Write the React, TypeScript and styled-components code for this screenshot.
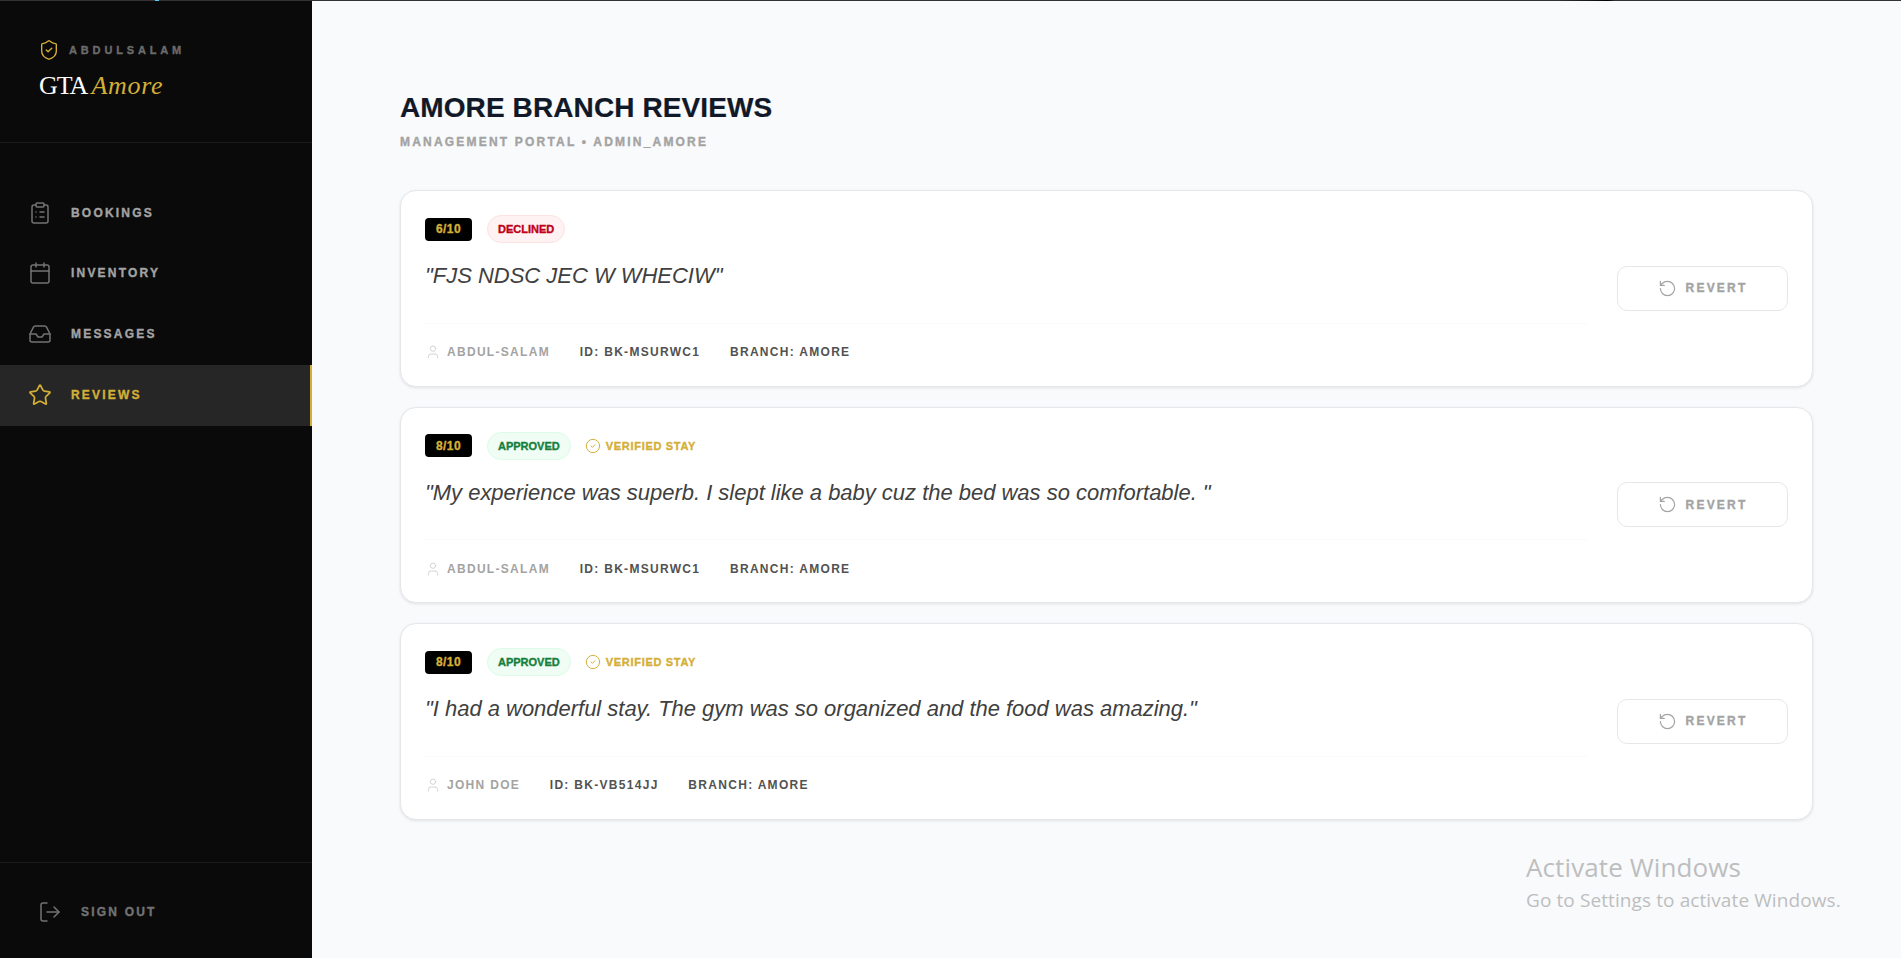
import * as React from 'react';
import styled, { createGlobalStyle, css } from 'styled-components';
import {
  Calendar,
  CircleCheck,
  ClipboardList,
  Inbox,
  LogOut,
  RotateCcw,
  ShieldCheck,
  Star,
  User,
} from 'lucide-react';

const GOLD = '#d4af37';

// the small labels are set in a black weight, which Liberation Sans does not have
const heavy = css`
  font-weight: 700;
  -webkit-text-stroke: 0.35px currentColor;
`;

const GlobalStyle = createGlobalStyle`
  html, body {
    margin: 0;
    padding: 0;
    background: #f9fafb;
  }
  body {
    font-family: "Liberation Sans", Arial, sans-serif;
  }
  * {
    box-sizing: border-box;
  }
`;

const Page = styled.div`
  position: relative;
  display: flex;
  height: 958px;
  overflow: hidden;
`;

const TopLine = styled.div`
  position: absolute;
  top: 0;
  left: 0;
  right: 0;
  height: 1px;
  background: linear-gradient(
    90deg,
    #333333 0,
    #333333 1555px,
    #111111 1596px,
    #000000 1608px,
    #333333 1615px,
    #333333 100%
  );
`;

const TopLineAccent = styled.div`
  position: absolute;
  top: 0;
  left: 155px;
  width: 4px;
  height: 1px;
  background: #5ec8ee;
`;

const Sidebar = styled.aside`
  width: 312px;
  flex: none;
  display: flex;
  flex-direction: column;
  background: #0a0a0a;
`;

const Brand = styled.div`
  height: 143px;
  padding: 39px 38px 0;
  border-bottom: 1px solid #1a1a1a;
`;

const BrandTop = styled.div`
  display: flex;
  align-items: center;
  gap: 9px;
  height: 22px;
  color: ${GOLD};
`;

const BrandName = styled.span`
  ${heavy};
  font-size: 11px;
  letter-spacing: 3.85px;
  color: #6b6b6b;
`;

const Logo = styled.div`
  margin-top: 10px;
  margin-left: 1px;
  font-family: "Liberation Serif", "Times New Roman", serif;
  font-size: 26px;
  line-height: 30px;
  letter-spacing: -1px;
  color: #ffffff;
`;

const LogoAccent = styled.em`
  letter-spacing: 0.7px;
  color: ${GOLD};
`;

const Nav = styled.nav`
  flex: 1;
  display: flex;
  flex-direction: column;
  padding-top: 40px;
`;

const NavItem = styled.div<{ $active?: boolean }>`
  ${heavy};
  display: flex;
  align-items: center;
  gap: 19px;
  height: 60.75px;
  padding: 0 0 1.5px 28px;
  font-size: 12px;
  letter-spacing: 2.2px;
  color: ${(p) => (p.$active ? GOLD : '#a3a3a3')};
  background: ${(p) => (p.$active ? '#262626' : 'transparent')};
  border-right: 2px solid ${(p) => (p.$active ? GOLD : 'transparent')};

  svg {
    -webkit-text-stroke: 0;
    color: ${(p) => (p.$active ? GOLD : '#737373')};
  }
`;

const SidebarFooter = styled.div`
  ${heavy};
  height: 96px;
  padding: 3px 38px 0;
  display: flex;
  align-items: center;
  gap: 19px;
  border-top: 1px solid #1a1a1a;
  font-size: 12px;
  letter-spacing: 2.2px;
  color: #737373;
`;

const Main = styled.main`
  flex: 1;
  padding: 88px 88px 0;
`;

const Title = styled.h1`
  margin: 0;
  font-size: 28px;
  line-height: 40px;
  font-weight: 700;
  letter-spacing: 0.1px;
  -webkit-text-stroke: 0.2px currentColor;
  color: #111827;
`;

const Subtitle = styled.p`
  ${heavy};
  margin: 6px 0 0;
  font-size: 12px;
  line-height: 16px;
  letter-spacing: 2.2px;
  color: #a3a3a3;
`;

const CardList = styled.div`
  display: flex;
  flex-direction: column;
  gap: 20px;
  margin-top: 40px;
`;

const Card = styled.article`
  display: flex;
  align-items: center;
  gap: 30px;
  padding: 24px;
  background: #ffffff;
  border: 1px solid #e5e7eb;
  border-radius: 16px;
  box-shadow: 0 1px 3px rgba(0, 0, 0, 0.1);
`;

const CardBody = styled.div`
  flex: 1;
  min-width: 0;
`;

const BadgeRow = styled.div`
  display: flex;
  align-items: center;
  gap: 15px;
  height: 28px;
`;

const Score = styled.span`
  ${heavy};
  display: inline-flex;
  align-items: center;
  justify-content: center;
  width: 47px;
  height: 23px;
  border-radius: 4px;
  background: #000000;
  color: ${GOLD};
  font-size: 12px;
  letter-spacing: 0.4px;
`;

const Status = styled.span<{ $approved?: boolean }>`
  ${heavy};
  display: inline-flex;
  align-items: center;
  height: 28px;
  padding: 0 10px;
  border-radius: 14px;
  font-size: 11px;
  background: ${(p) => (p.$approved ? '#f0fdf4' : '#fef2f2')};
  color: ${(p) => (p.$approved ? '#15803d' : '#c00018')};
  border: 1px solid ${(p) => (p.$approved ? '#dcfce7' : '#fee2e2')};
`;

const Verified = styled.span`
  ${heavy};
  display: inline-flex;
  align-items: center;
  gap: 5px;
  margin-left: -1px;
  font-size: 11px;
  letter-spacing: 0.7px;
  color: ${GOLD};

  svg {
    -webkit-text-stroke: 0;
  }
`;

const Quote = styled.p`
  margin: 16px 0 0;
  font-size: 22px;
  line-height: 33px;
  font-style: italic;
  letter-spacing: -0.02px;
  color: #404040;
`;

const Meta = styled.div`
  display: flex;
  align-items: center;
  gap: 29.7px;
  margin-top: 30.5px;
  padding-top: 19px;
  height: 39px;
  border-top: 1px solid #f9fafb;
  font-size: 12px;
  font-weight: 700;
  letter-spacing: 1.3px;
  color: #525252;
`;

const Author = styled.span`
  display: inline-flex;
  align-items: center;
  gap: 6px;
  color: #a3a3a3;

  svg {
    color: #d4d4d4;
  }
`;

const RevertButton = styled.button`
  ${heavy};
  flex: none;
  display: flex;
  align-items: center;
  justify-content: center;
  gap: 9px;
  width: 171px;
  height: 45px;
  padding: 0;
  background: #ffffff;
  border: 1px solid #e5e7eb;
  border-radius: 10px;
  font-family: inherit;
  font-size: 12px;
  letter-spacing: 2.2px;
  color: #a3a3a3;

  svg {
    -webkit-text-stroke: 0;
    color: #a3a3a3;
  }
`;

const ActivateNotice = styled.div`
  position: absolute;
  left: 1526px;
  top: 851px;
  font-family: "Open Sans", sans-serif;
  color: #bdbebf;
`;

const ActivateTitle = styled.div`
  font-size: 26px;
  font-weight: 400;
  line-height: 32px;
  letter-spacing: 0.1px;
`;

const ActivateHint = styled.div`
  font-size: 19px;
  font-weight: 400;
  line-height: 34px;
  letter-spacing: 0.1px;
`;

const navItems = [
  { label: 'BOOKINGS', icon: ClipboardList },
  { label: 'INVENTORY', icon: Calendar },
  { label: 'MESSAGES', icon: Inbox },
  { label: 'REVIEWS', icon: Star, active: true },
];

const reviews = [
  {
    score: '6/10',
    approved: false,
    quote: '"FJS NDSC JEC W WHECIW"',
    author: 'ABDUL-SALAM',
    id: 'BK-MSURWC1',
  },
  {
    score: '8/10',
    approved: true,
    quote: '"My experience was superb. I slept like a baby cuz the bed was so comfortable. "',
    author: 'ABDUL-SALAM',
    id: 'BK-MSURWC1',
  },
  {
    score: '8/10',
    approved: true,
    quote: '"I had a wonderful stay. The gym was so organized and the food was amazing."',
    author: 'JOHN DOE',
    id: 'BK-VB514JJ',
  },
];

const App: React.FC = () => (
  <Page>
    <GlobalStyle />
    <Sidebar>
      <Brand>
        <BrandTop>
          <ShieldCheck size={22} strokeWidth={1.5} />
          <BrandName>ABDULSALAM</BrandName>
        </BrandTop>
        <Logo>
          GTA <LogoAccent>Amore</LogoAccent>
        </Logo>
      </Brand>
      <Nav>
        {navItems.map(({ label, icon: Icon, active }) => (
          <NavItem key={label} $active={active}>
            <Icon size={24} strokeWidth={active ? 1.75 : 1.5} />
            {label}
          </NavItem>
        ))}
      </Nav>
      <SidebarFooter>
        <LogOut size={24} strokeWidth={1.5} />
        SIGN OUT
      </SidebarFooter>
    </Sidebar>
    <Main>
      <Title>AMORE BRANCH REVIEWS</Title>
      <Subtitle>MANAGEMENT PORTAL • ADMIN_AMORE</Subtitle>
      <CardList>
        {reviews.map((review) => (
          <Card key={review.quote}>
            <CardBody>
              <BadgeRow>
                <Score>{review.score}</Score>
                <Status $approved={review.approved}>
                  {review.approved ? 'APPROVED' : 'DECLINED'}
                </Status>
                {review.approved && (
                  <Verified>
                    <CircleCheck size={16} strokeWidth={1.5} />
                    VERIFIED STAY
                  </Verified>
                )}
              </BadgeRow>
              <Quote>{review.quote}</Quote>
              <Meta>
                <Author>
                  <User size={16} strokeWidth={1.5} />
                  {review.author}
                </Author>
                <span>ID: {review.id}</span>
                <span>BRANCH: AMORE</span>
              </Meta>
            </CardBody>
            <RevertButton>
              <RotateCcw size={19} strokeWidth={1.5} />
              REVERT
            </RevertButton>
          </Card>
        ))}
      </CardList>
    </Main>
    <TopLine />
    <TopLineAccent />
    <ActivateNotice>
      <ActivateTitle>Activate Windows</ActivateTitle>
      <ActivateHint>Go to Settings to activate Windows.</ActivateHint>
    </ActivateNotice>
  </Page>
);

export default App;
